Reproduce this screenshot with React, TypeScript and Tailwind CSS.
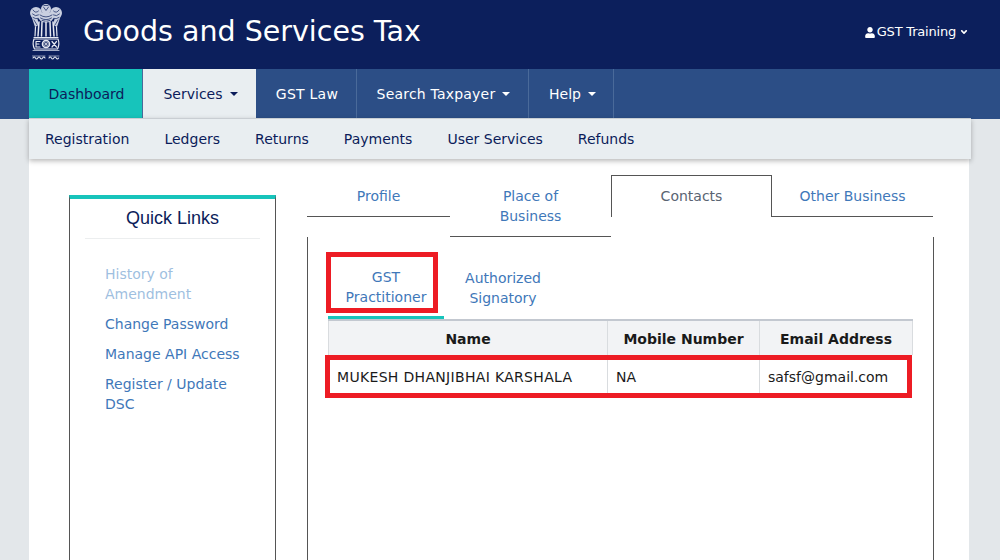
import { FaUser, FaAngleDown } from "react-icons/fa";

const Caret = ({ dark }: { dark?: boolean }) => (
  <span className={`ml-[7px] inline-block align-middle w-0 h-0 border-x-4 border-x-transparent border-t-4 ${dark ? "border-t-[#0b1c5a]" : "border-t-white"}`} />
);

const Emblem = () => (
  <svg width="36" height="60" viewBox="0 0 36 60" className="shrink-0">
    <g fill="#c9cfe0" stroke="none">
      <ellipse cx="18" cy="7" rx="5" ry="5" />
      <ellipse cx="8" cy="11" rx="6" ry="6" />
      <ellipse cx="28" cy="11" rx="6" ry="6" />
      <ellipse cx="18" cy="15" rx="7.5" ry="5.5" />
      <path d="M3 13 L9 15 L11 23 L7 25 Z M33 13 L27 15 L25 23 L29 25 Z" />
    </g>
    <g fill="none" stroke="#0c1f5c" strokeWidth="0.7" strokeLinecap="round">
      <path d="M15.5 5 L18 8.5 L20.5 5 M16 3.5 h4" />
      <path d="M5 8 Q7.5 12 10.5 9 M25.5 9 Q28.5 12 31 8" />
      <path d="M4.5 12 q3 3 6 1 M25.5 13 q3 2 6 -1 M5 15.5 q3 2 5 1 M26 16.5 q2 1 5 -1" />
      <path d="M12 13 q6 4 12 0 M12.5 16 q5.5 3.5 11 0 M14 18.5 q4 2 8 0" />
      <path d="M6 18 L9 23 M30 18 L27 23" />
    </g>
    <g fill="none" stroke="#e6e9f2" strokeLinecap="round">
      <path d="M11 20 L10 34 M14 20 L13.5 34 M18 20 V34 M22 20 L22.5 34 M25 20 L26 34" strokeWidth="1.5" />
      <path d="M7.5 25 L7 34 M28.5 25 L29 34" strokeWidth="1.2" />
      <path d="M6 35.5 H30" strokeWidth="1.2" />
      <path d="M6 37 Q4 42 6.5 47 H29.5 Q32 42 30 37 Z" strokeWidth="1.2" />
      <circle cx="18" cy="42" r="3.5" strokeWidth="1.6" />
      <path d="M18 38.5 V45.5 M14.5 42 H21.5 M15.5 39.5 L20.5 44.5 M20.5 39.5 L15.5 44.5" strokeWidth="0.6" />
      <path d="M8 39.5 H12 M8 39.5 V45 H12 M8 42 H11" strokeWidth="1.1" />
      <path d="M24 39.5 L28.5 45 M28.5 39.5 L24 45" strokeWidth="1.2" />
      <path d="M5 48.5 H31" strokeWidth="0.7" />
      <path d="M5 56 q1.2 -2 2.4 0 t2.4 0 t2.4 0 t2.4 0 t2.4 0 M21 56 q1.2 -2 2.4 0 t2.4 0 t2.4 0 t2.4 0" strokeWidth="1.1" />
      <path d="M4.5 54 H17 M21 54 H31" strokeWidth="0.6" />
    </g>
  </svg>
);

const navItem = "flex items-center h-full border-r border-[#4a6a9a] text-white";

export default function App() {
  return (
    <div className="w-[1000px] h-[560px] overflow-hidden bg-[#e3e7ea] text-[14px] leading-5 font-['DejaVu_Sans',sans-serif]">
      <header className="h-[69px] bg-[#0c1f5c] flex pl-[28px] pr-[31px] pt-[2px]">
        <Emblem />
        <h1 className="ml-[19px] mt-[10px] text-[28.5px] leading-[40px] text-white">Goods and Services Tax</h1>
        <div className="ml-auto mt-[20px] h-5 flex items-center text-white text-[13px] tracking-[-0.2px]">
          <FaUser className="w-[10px] h-[11px] mr-[2px]" />
          GST Training
          <FaAngleDown className="w-[10px] h-[10px] ml-[3px]" />
        </div>
      </header>

      <nav className="h-[50px] bg-[#2c4e86] pl-[29px] flex text-[14px]">
        <div className="w-[114px] h-full bg-[#17c4bb] text-[#0b1c5a] flex items-center justify-center pl-[2px] border-r border-[#4a6a9a]">Dashboard</div>
        <div className="w-[113px] h-full bg-[#e9eef1] text-[#0b1c5a] flex items-center justify-center pl-[2px]">Services <Caret dark /></div>
        <div className={`${navItem} w-[101px] justify-center pl-[2px] tracking-[0.25px]`}>GST Law</div>
        <div className={`${navItem} w-[172px] justify-center pl-[2px] tracking-[0.2px]`}>Search Taxpayer <Caret /></div>
        <div className={`${navItem} w-[85px] justify-center pl-[3px]`}>Help <Caret /></div>
      </nav>

      <div className="relative z-10 ml-[29px] w-[942px] h-[41px] -mt-px bg-[#e9eef1] border-t border-[#c9ced3] shadow-[0_2px_5px_rgba(0,0,0,0.28)] flex items-center pl-[16px] gap-[35px] text-[#0b1c5a]">
        <span>Registration</span>
        <span>Ledgers</span>
        <span>Returns</span>
        <span>Payments</span>
        <span>User Services</span>
        <span>Refunds</span>
      </div>

      <main className="ml-[29px] w-[940px] h-[401px] bg-white flex pl-[40px] pt-[36px]">
        <aside className="w-[207px] h-[400px] shrink-0 border-x border-[#555] border-t-4 border-t-[#17c4bb]">
          <div className="mx-[15px] h-[40px] border-b border-[#eceeef] text-center pt-[7px] text-[#0b1c5a] text-[18px] leading-6 font-['Liberation_Sans',sans-serif]">
            Quick Links
          </div>
          <ul className="mt-[25px] pl-[35px] pr-[30px] text-[#3f78b9] flex flex-col gap-[10px]">
            <li className="text-[#9fbfdf]">History of Amendment</li>
            <li>Change Password</li>
            <li>Manage API Access</li>
            <li>Register / Update DSC</li>
          </ul>
        </aside>

        <section className="ml-[31px] w-[627px] -mt-[20px]">
          <div className="flex h-[62px] text-center text-[#3f78b9]">
            <div className="w-[143px] h-[42px] pt-[11px] border-b border-[#555]">Profile</div>
            <div className="w-[161px] h-[62px] pt-[11px] border-b border-[#555] px-[30px]">Place of Business</div>
            <div className="w-[161px] h-[42px] pt-[10px] border-x border-t border-[#555] text-[#5a6472]">Contacts</div>
            <div className="w-[161px] h-[42px] pt-[11px] border-b border-[#555]">Other Business</div>
          </div>
          <div className="h-[400px] border-x border-[#555] px-[20px]">
            <div className="flex h-[83px] pt-[30px] text-center text-[#3f78b9]">
              <div className="relative w-[116px] h-[52px] border-b-[3px] border-[#17c4bb] px-[14px]">
                GST Practitioner
                <div className="absolute left-[-2px] top-[-15px] w-[112px] h-[61px] border-[5px] border-[#ed1c24]" />
              </div>
              <div className="w-[118px] pt-px px-[14px]">Authorized Signatory</div>
            </div>
            <div className="relative w-[585px] -mt-[1px]">
              <div className="grid grid-cols-[279px_152px_154px] h-[36px] border-t-2 border-[#c3c8d0] bg-[#f2f3f5] font-bold text-[#1a1a1a] text-center">
                <div className="flex items-center justify-center pt-px border-l border-[#d9dcdf]">Name</div>
                <div className="flex items-center justify-center pt-px border-l border-[#d9dcdf]">Mobile Number</div>
                <div className="flex items-center justify-center pt-px border-x border-[#d9dcdf]">Email Address</div>
              </div>
              <div className="grid grid-cols-[279px_152px_154px] h-[43px] text-[#1a1a1a]">
                <div className="flex items-center pl-[9px] whitespace-nowrap tracking-[0.32px]">MUKESH DHANJIBHAI KARSHALA</div>
                <div className="flex items-center pl-[8px] border-l border-[#d9dcdf]">NA</div>
                <div className="flex items-center pl-[8px] border-l border-[#d9dcdf]">safsf@gmail.com</div>
              </div>
              <div className="absolute left-[-3px] top-[36px] w-[587px] h-[43px] border-[5px] border-[#ed1c24]" />
            </div>
          </div>
        </section>
      </main>
    </div>
  );
}
